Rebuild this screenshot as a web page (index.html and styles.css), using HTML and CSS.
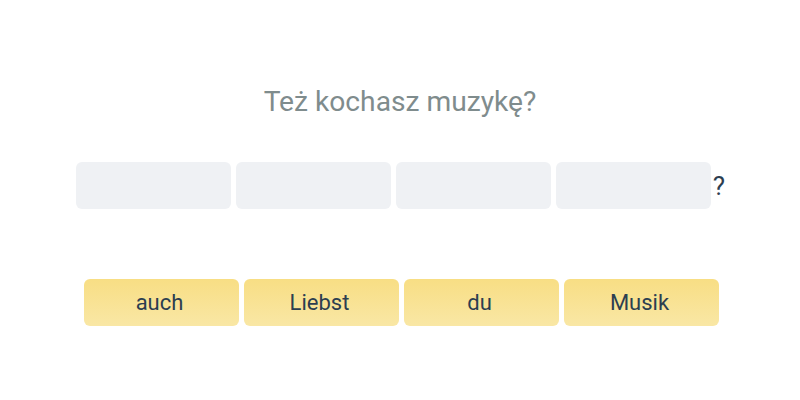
FILE: index.html
```html
<!DOCTYPE html>
<html lang="pl">
<head>
  <meta charset="UTF-8" />
  <meta name="viewport" content="width=device-width, initial-scale=1" />
  <title>Też kochasz muzykę?</title>
  <link rel="stylesheet" href="styles.css">
</head>
<body>
  <div class="exercise">
    <h1 class="prompt">Też kochasz muzykę?</h1>

    <div class="answer-row">
      <div class="slot"></div>
      <div class="slot"></div>
      <div class="slot"></div>
      <div class="slot"></div>
      <span class="punct">?</span>
    </div>

    <div class="word-bank">
      <button class="word">auch</button>
      <button class="word">Liebst</button>
      <button class="word">du</button>
      <button class="word">Musik</button>
    </div>
  </div>
</body>
</html>
```

FILE: styles.css
```css
* {
  box-sizing: border-box;
}
body, html {
  margin: 0;
  padding: 0;
  height: 100%;
  font-family: 'Roboto', 'Liberation Sans', sans-serif;
  background: #fff;
}
.exercise {
  display: flex;
  flex-direction: column;
  align-items: center;
  padding-top: 84px;
}
.prompt {
  margin: 0;
  font-size: 28.2px;
  font-weight: 400;
  line-height: 36px;
  color: #7f8c8d;
}
.answer-row {
  display: flex;
  align-items: center;
  gap: 5px;
  margin-top: 42px;
  padding-left: 1px;
}
.slot {
  width: 155px;
  height: 47px;
  background-color: #eff1f4;
  border-radius: 6px;
}
.punct {
  font-size: 26px;
  color: #2c3e50;
  margin-left: -3px;
}
.word-bank {
  display: flex;
  gap: 5px;
  margin-top: 70px;
  margin-left: 3px;
}
.word {
  width: 155px;
  height: 47px;
  padding: 0 4px 0 0;
  border: none;
  border-radius: 6px;
  background: linear-gradient(to bottom, #f8de84, #f9e7a5);
  font-family: inherit;
  font-size: 22px;
  color: #2c3e50;
  cursor: pointer;
}
```
